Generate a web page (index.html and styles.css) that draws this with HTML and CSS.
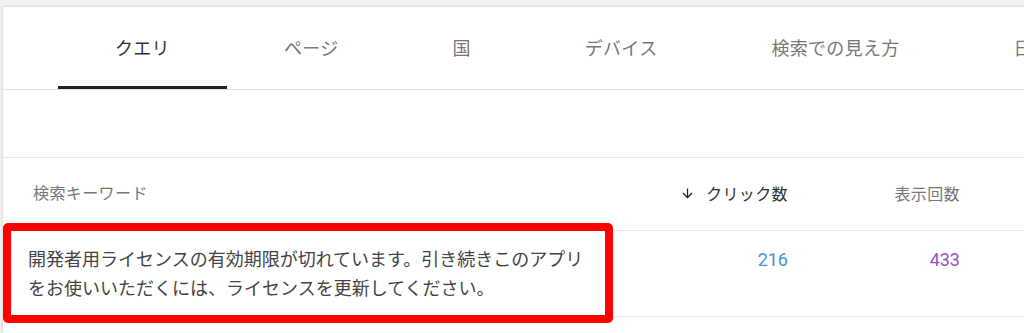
FILE: index.html
```html
<!DOCTYPE html>
<html lang="ja">
<head>
<meta charset="utf-8">
<link rel="stylesheet" href="styles.css">
</head>
<body>
<div class="card">
  <div class="tabs">
    <div class="tab active">クエリ</div>
    <div class="tab">ページ</div>
    <div class="tab">国</div>
    <div class="tab">デバイス</div>
    <div class="tab">検索での見え方</div>
    <div class="tab">日付</div>
  </div>
  <div class="filters"></div>
  <div class="grid head">
    <div class="col-key">検索キーワード</div>
    <div class="col-num sorted">
      <svg class="arrow" viewBox="0 0 24 24" width="15" height="15"><path d="M20 12l-1.41-1.41L13 16.17V4h-2v12.17l-5.58-5.59L4 12l8 8 8-8z" fill="#222"/></svg>
      <span>クリック数</span>
    </div>
    <div class="col-num">表示回数</div>
  </div>
  <div class="grid row">
    <div class="col-key msg">開発者用ライセンスの有効期限が切れています。引き続きこのアプリをお使いいただくには、ライセンスを更新してください。</div>
    <div class="col-num clicks">216</div>
    <div class="col-num imps">433</div>
    <div class="highlight"></div>
  </div>
</div>
</body>
</html>
```
FILE: styles.css
```css
html, body {
  margin: 0;
  padding: 0;
}
body {
  background: #f2f2f2;
  height: 333px;
  overflow: hidden;
  font-family: Roboto, "Noto Sans CJK JP", sans-serif;
}
.card {
  position: relative;
  margin: 7px 0 0 3px;
  background: #fff;
  box-shadow: 0 0 3px rgba(0, 0, 0, 0.18);
  overflow: hidden;
  height: 340px;
}
.tabs {
  display: flex;
  padding-left: 55px;
  border-bottom: 1px solid #e3e3e3;
  white-space: nowrap;
}
.tab {
  flex-shrink: 0;
  height: 79px;
  padding: 0 57px;
  display: flex;
  align-items: center;
  font-size: 18px;
  letter-spacing: 0.3px;
  color: #777;
  border-bottom: 3px solid transparent;
}
.tab.active {
  color: #333;
  border-bottom-color: #222;
}
.filters {
  height: 67px;
  border-bottom: 1px solid #e6e6e6;
}
.grid {
  display: grid;
  grid-template-columns: 1fr 172px 172px;
  padding-right: 64px;
  position: relative;
}
.head {
  height: 72px;
  align-items: center;
  border-bottom: 1px solid #e6e6e6;
  font-size: 16px;
  letter-spacing: 0.4px;
  color: #777;
}
.head .col-key {
  padding-left: 30px;
  padding-bottom: 4px;
}
.head .col-num {
  padding-bottom: 2px;
}
.col-num {
  display: flex;
  justify-content: flex-end;
  align-items: center;
}
.sorted {
  color: #333;
  gap: 11px;
}
.arrow {
  display: block;
}
.row {
  height: 86px;
  box-sizing: border-box;
  padding-top: 14px;
  align-items: start;
  border-bottom: 1px solid #e6e6e6;
  font-size: 18px;
  line-height: 29px;
}
.msg {
  padding-left: 25px;
  max-width: 566px;
  color: #444;
}
.clicks {
  color: #4a90e2;
  font-size: 18px;
}
.imps {
  color: #9b4fc6;
  font-size: 18px;
}
.highlight {
  position: absolute;
  left: 0;
  top: -8px;
  width: 610px;
  height: 100px;
  box-sizing: border-box;
  border: 8px solid #ff0000;
  border-radius: 5px;
}
```
